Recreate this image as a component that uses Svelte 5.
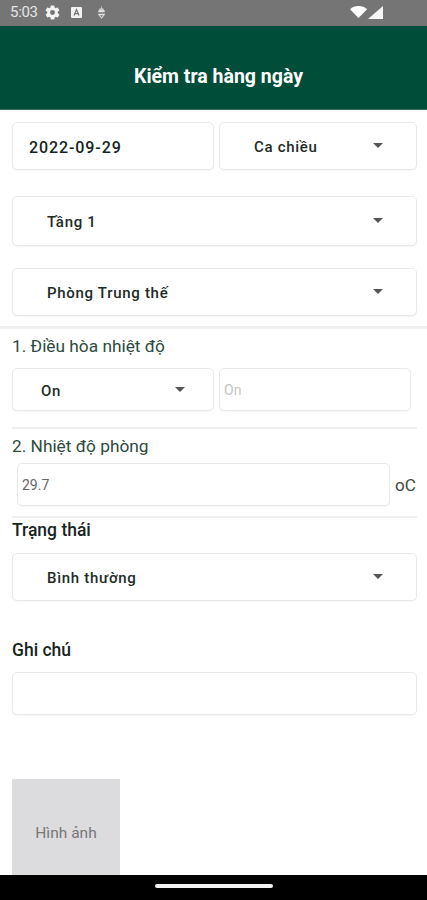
{#snippet select(label, cls = '')}
  <div class="box select {cls}">
    <span class="value">{label}</span>
    <svg class="caret" width="10" height="5" viewBox="0 0 10 5"><path d="M0 0h10L5 5z" fill="#555" /></svg>
  </div>
{/snippet}

<div class="page">
  <div class="status">
    <span class="time">5:03</span>
    <svg class="ic-gear" width="17" height="17" viewBox="0 0 24 24"><path fill="#f2f2f2" d="M19.4 13c.04-.33.1-.66.1-1s-.06-.67-.1-1l2.100-1.650c.2-.15.25-.42.13-.64l-2-3.460c-.12-.22-.4-.3-.6-.22l-2.500 1c-.52-.4-1.080-.73-1.700-.98l-.37-2.650A.5.5 0 0 0 14 2h-4a.5.5 0 0 0-.5.42l-.37 2.650c-.62.25-1.180.58-1.700.98l-2.500-1c-.22-.08-.48 0-.6.22l-2 3.460c-.12.22-.07.49.13.64L4.600 11c-.04.33-.1.66-.1 1s.06.67.1 1l-2.100 1.650c-.2.15-.25.42-.13.64l2 3.460c.12.22.4.3.6.22l2.500-1c.52.4 1.080.73 1.700.98l.37 2.650c.05.24.26.42.5.42h4c.25 0 .45-.18.5-.42l.37-2.650c.62-.25 1.180-.58 1.700-.98l2.500 1c.22.08.48 0 .6-.22l2-3.460c.12-.22.07-.49-.13-.64zM12 15.500a3.500 3.500 0 1 1 0-7 3.500 3.500 0 0 1 0 7z" /></svg>
    <svg class="ic-a" width="11" height="11" viewBox="0 0 11 11"><rect width="11" height="11" rx="1" fill="#f2f2f2" /><path d="M3 8.500 5.500 2.500 8 8.500M4 6.600h3" fill="none" stroke="#757575" stroke-width="1.200" /></svg>
    <svg class="ic-dl" width="9" height="13" viewBox="0 0 9 13"><path d="M4.500 0v3M2.500 2.500h4M1.500 5.500a3 2.200 0 0 1 6 0v.5h-6zM1 8h7L4.500 12.500z" fill="#e0e0e0" stroke="#e0e0e0" stroke-width=".5" /><path d="M3 9.200h3l-1.500 2z" fill="#757575" /></svg>
    <span class="spacer"></span>
    <svg class="ic-wifi" width="17" height="12" viewBox="0 0 17 12"><path d="M0 3.200C2.200 1.200 5.200 0 8.500 0s6.300 1.200 8.500 3.200L8.500 12z" fill="#fff" /></svg>
    <svg class="ic-signal" width="15" height="13" viewBox="0 0 15 13"><path d="M15 0v13H0z" fill="#f6f6f6" /></svg>
  </div>

  <header class="bar"><h1>Kiểm tra hàng ngày</h1></header>

  <div class="row first">
    <div class="box date">2022-09-29</div>
    {@render select('Ca chiều', 'shift')}
  </div>

  {@render select('Tầng 1', 'wide floor')}
  {@render select('Phòng Trung thế', 'wide room')}

  <hr class="thick" />

  <div class="label q1">1. Điều hòa nhiệt độ</div>
  <div class="row ac">
    {@render select('On', 'ac-select')}
    <div class="box field ghost">On</div>
  </div>

  <hr class="thin one" />

  <div class="label q2">2. Nhiệt độ phòng</div>
  <div class="temp">
    <div class="box field">29.7</div>
    <span class="unit">oC</span>
  </div>

  <hr class="thin two" />

  <div class="label strong status-label">Trạng thái</div>
  {@render select('Bình thường', 'wide state')}

  <div class="label strong note-label">Ghi chú</div>
  <div class="box note"></div>

  <div class="photo">Hình ảnh</div>

  <div class="nav"><span class="pill"></span></div>
</div>

<style>
  :global(body) {
    margin: 0;
    background: #fff;
  }
  .page {
    position: relative;
    width: 427px;
    height: 900px;
    overflow: hidden;
    background: #fff;
    font-family: Roboto, "Noto Sans", sans-serif;
    color: #1d2b26;
  }
  .status {
    display: flex;
    align-items: center;
    height: 26px;
    padding: 0 0 2px 10px;
    box-sizing: border-box;
    background: #757575;
    color: #e4e4e4;
    font-size: 15px;
  }
  .time { letter-spacing: -0.3px; }
  .ic-gear { margin-left: 6px; }
  .ic-a { margin-left: 10px; }
  .ic-dl { margin-left: 15px; }
  .spacer { flex: 1; }
  .ic-signal { margin: 0 44px 0 1px; }
  .bar {
    display: flex;
    align-items: center;
    justify-content: center;
    height: 84px;
    padding: 18px 0 0 10px;
    box-sizing: border-box;
    background: #004d39;
    border-bottom: 1px solid #3c6f60;
  }
  h1 {
    margin: 0;
    font-size: 19.5px;
    font-weight: 700;
    color: #fff;
  }
  .row {
    display: flex;
    gap: 5px;
    padding-left: 12px;
  }
  .row.first { margin-top: 12px; }
  .box {
    box-sizing: border-box;
    display: flex;
    align-items: center;
    background: #fff;
    border: 1px solid #e8e9e9;
    border-radius: 5px;
    box-shadow: 0 1px 1px rgba(0, 0, 0, 0.04);
  }
  .date {
    width: 202px;
    height: 48px;
    padding: 2px 0 0 16px;
    font-size: 16px;
    font-weight: 500;
    letter-spacing: 0.9px;
    color: #15241f;
  }
  .select {
    position: relative;
    padding-top: 2px;
    font-size: 15px;
    font-weight: 500;
    letter-spacing: 0.7px;
  }
  .caret {
    position: absolute;
    right: 33px;
    top: 50%;
    margin-top: -3px;
  }
  .shift {
    width: 198px;
    height: 48px;
    padding-left: 34px;
  }
  .wide {
    width: 405px;
    margin-left: 12px;
    padding-left: 34px;
  }
  .floor { height: 50px; margin-top: 26px; }
  .room { height: 48px; margin-top: 22px; }
  .thick {
    height: 3px;
    margin: 10px 0 0;
    border: 0;
    background: #eeefef;
  }
  .thin {
    width: 405px;
    height: 2px;
    border: 0;
    background: #eeefef;
    margin: 0 0 0 12px;
  }
  .thin.one { margin-top: 16px; }
  .thin.two { margin-top: 10px; }
  .label {
    margin-left: 12px;
    font-size: 17.3px;
    line-height: 20px;
    color: #2c4a40;
  }
  .q1 { margin-top: 7px; }
  .q2 { margin-top: 7px; }
  .strong {
    font-size: 17.5px;
    font-weight: 500;
    color: #17251f;
  }
  .ac { margin-top: 12px; }
  .ac-select {
    width: 202px;
    height: 43px;
    padding-left: 28px;
  }
  .ac-select .caret { right: 28px; }
  .field {
    height: 43px;
    font-size: 14px;
    padding-left: 4px;
    color: #666;
  }
  .ghost {
    width: 192px;
    color: #c4c4c4;
  }
  .temp {
    display: flex;
    align-items: center;
    gap: 5px;
    margin: 7px 0 0 17px;
  }
  .temp .field { width: 373px; }
  .unit {
    font-size: 17px;
    color: #3a4a45;
  }
  .status-label { margin-top: 2px; }
  .state { height: 48px; margin-top: 13px; }
  .note-label { margin-top: 39px; }
  .note {
    width: 405px;
    height: 43px;
    margin: 12px 0 0 12px;
  }
  .photo {
    display: flex;
    align-items: center;
    justify-content: center;
    width: 108px;
    height: 108px;
    margin: 64px 0 0 12px;
    background: #dcdcde;
    font-size: 15.5px;
    color: #777;
  }
  .nav {
    position: absolute;
    left: 0;
    right: 0;
    bottom: 0;
    height: 25px;
    display: flex;
    justify-content: center;
    padding-top: 9px;
    box-sizing: border-box;
    background: #000;
  }
  .pill {
    width: 118px;
    height: 4px;
    border-radius: 2px;
    background: #f0f0f0;
  }
</style>
